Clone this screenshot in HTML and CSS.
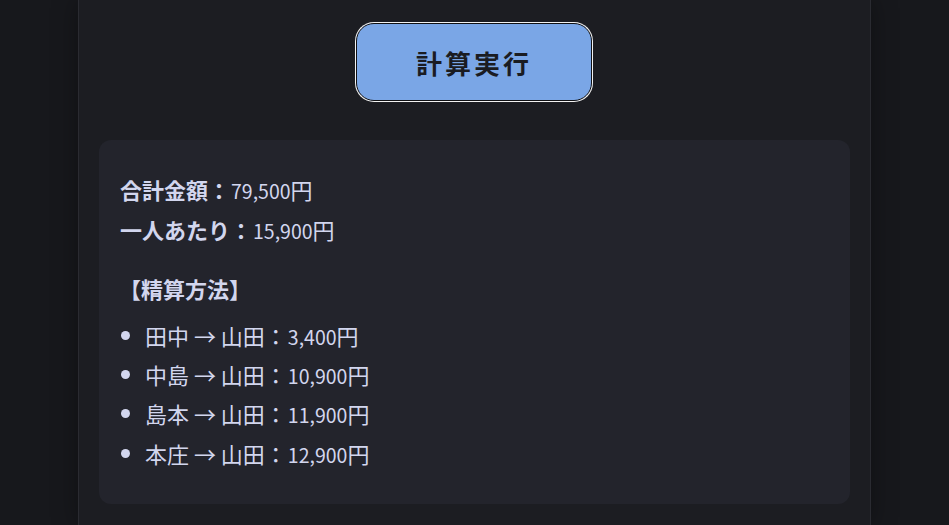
FILE: index.html
```html
<!DOCTYPE html>
<html lang="ja">
<head>
<meta charset="utf-8">
<link rel="stylesheet" href="styles.css">
</head>
<body>
<div class="container">
  <div class="actions">
    <button class="run-btn">計算実行</button>
  </div>
  <div class="result">
    <p class="line"><strong>合計金額：</strong><span class="num">79,500</span>円</p>
    <p class="line"><strong>一人あたり：</strong><span class="num">15,900</span>円</p>
    <p class="heading"><strong>【精算方法】</strong></p>
    <ul class="list">
      <li>田中 → 山田：<span class="num">3,400</span>円</li>
      <li>中島 → 山田：<span class="num">10,900</span>円</li>
      <li>島本 → 山田：<span class="num">11,900</span>円</li>
      <li>本庄 → 山田：<span class="num">12,900</span>円</li>
    </ul>
  </div>
</div>
</body>
</html>
```

FILE: styles.css
```css
html, body {
  margin: 0;
  padding: 0;
  height: 100%;
}
body {
  background: #17181c;
  font-family: "Noto Sans CJK JP", "Noto Sans", sans-serif;
  color: #d2d6ee;
  overflow: hidden;
}
.container {
  width: 793px;
  margin: 0 auto;
  min-height: 100%;
  background: #1c1d22;
  border-left: 1px solid #2a2b31;
  border-right: 1px solid #2a2b31;
  box-shadow: 0 0 24px rgba(0,0,0,0.35);
  padding: 23px 20px 0;
  box-sizing: border-box;
}
.actions {
  display: flex;
  justify-content: center;
}
.run-btn {
  width: 236px;
  height: 78px;
  background: #7aa6e6;
  border: 1px solid #101114;
  box-shadow: 0 0 0 1px #f2f2f2;
  border-radius: 18px;
  font-family: "Noto Sans CJK JP", sans-serif;
  font-size: 26px;
  font-weight: 700;
  letter-spacing: 3px;
  color: #1a1c22;
  padding: 0;
  margin-left: -1px;
}
.result {
  margin-top: 39px;
  background: #23242c;
  border-radius: 12px;
  padding: 29px 21px 31px;
}
.line {
  margin: 0;
  font-size: 22px;
  line-height: 40px;
}
.line strong, .heading strong {
  font-weight: 700;
}
.num {
  font-size: 19.5px;
  line-height: 1;
  padding-left: 1px;
}
.heading {
  margin: 19px 0 0 -1px;
  font-size: 22px;
  line-height: 40px;
}
.list {
  margin: 8px 0 0;
  padding: 0 0 0 25px;
  list-style: none;
}
.list li {
  position: relative;
  font-size: 22px;
  line-height: 39.2px;
}
.list li::before {
  content: "";
  position: absolute;
  left: -24px;
  top: 15px;
  width: 9px;
  height: 9px;
  border-radius: 50%;
  background: #d2d6ee;
}
```
